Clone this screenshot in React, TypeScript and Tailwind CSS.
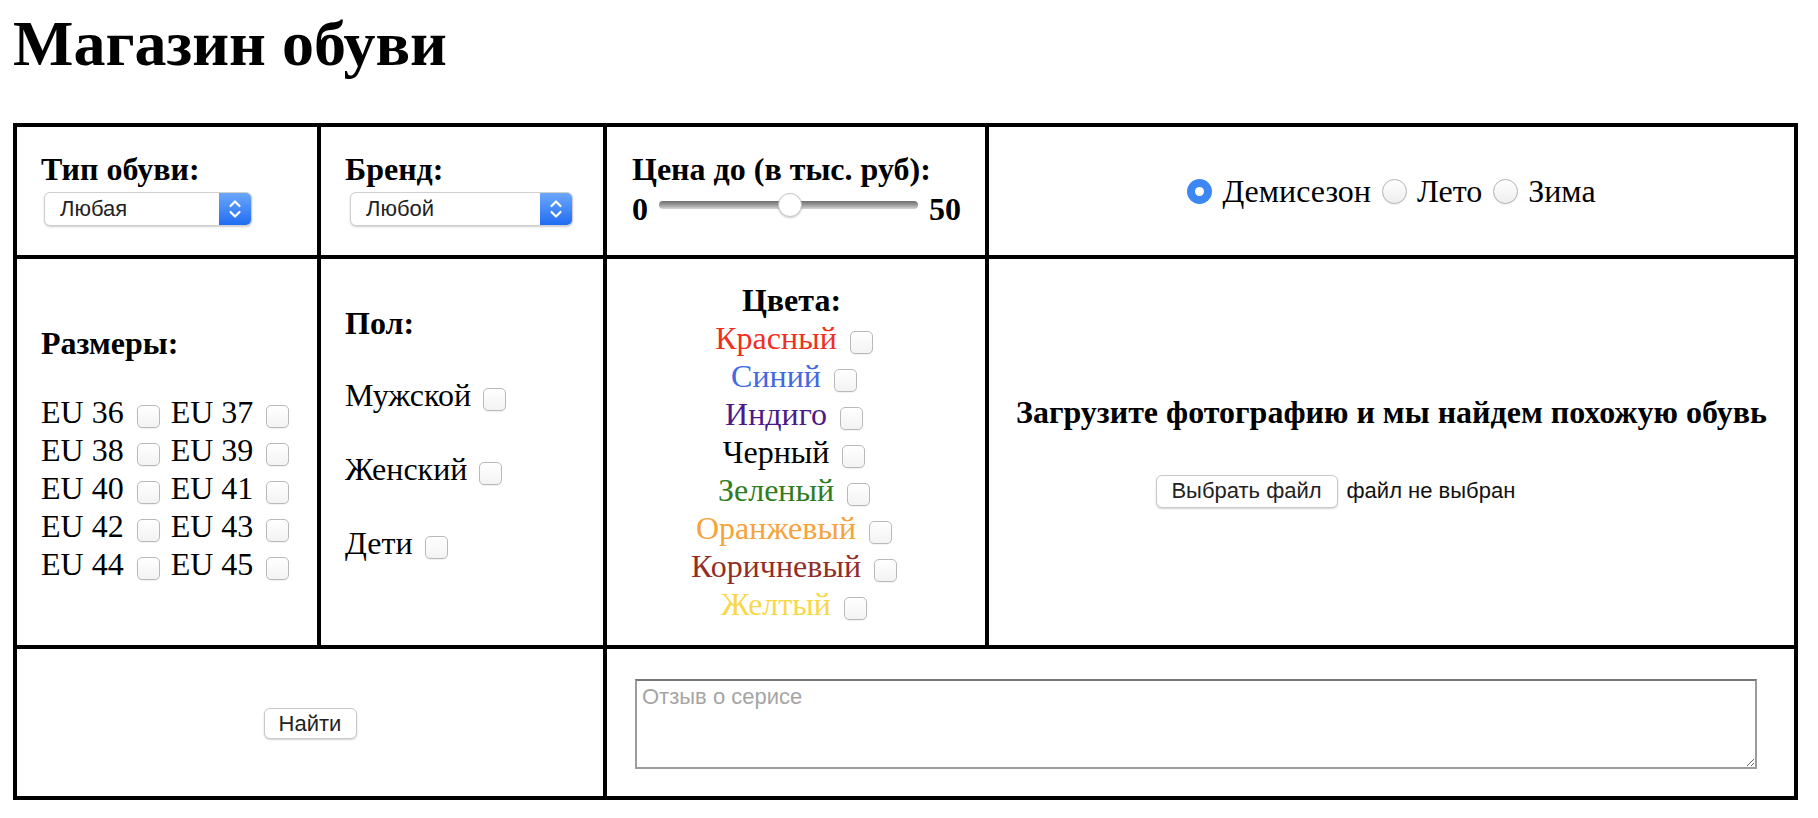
import React from 'react';

const sans = "font-['Liberation_Sans',Arial,sans-serif]";

function Check({ className = '' }: { className?: string }) {
  return (
    <input
      type="checkbox"
      readOnly
      className={`appearance-none shrink-0 w-[23px] h-[23px] rounded-[5px] border border-[#b9b9b9] bg-gradient-to-b from-white to-[#f3f3f3] shadow-[0_1px_1px_rgba(0,0,0,0.06)] ${className}`}
    />
  );
}

function Radio({ checked = false }: { checked?: boolean }) {
  if (checked) {
    return (
      <span className="flex w-[25px] h-[25px] shrink-0 items-center justify-center rounded-full bg-[#3d87f5]">
        <span className="w-[9px] h-[9px] rounded-full bg-white" />
      </span>
    );
  }
  return (
    <span className="block w-[25px] h-[25px] shrink-0 rounded-full border border-[#b3b3b3] bg-gradient-to-b from-white to-[#eeeeee] shadow-[0_1px_1px_rgba(0,0,0,0.08)]" />
  );
}

function FakeSelect({ label, className = '' }: { label: string; className?: string }) {
  return (
    <div
      className={`flex h-[34px] overflow-hidden rounded-[6px] border border-[#cfcfcf] bg-white shadow-[0_1px_2px_rgba(0,0,0,0.2)] ${className}`}
    >
      <span className={`flex flex-1 items-center pl-[15px] text-[22px] text-[#222] ${sans}`}>{label}</span>
      <span className="flex w-[32px] flex-col items-center justify-center bg-gradient-to-b from-[#6aa6fa] to-[#1f6cf3]">
        <svg width="14" height="22" viewBox="0 0 14 22" fill="none" stroke="white" strokeWidth="2.2" strokeLinecap="round" strokeLinejoin="round">
          <path d="M2.5 8 L7 3.5 L11.5 8" />
          <path d="M2.5 14 L7 18.5 L11.5 14" />
        </svg>
      </span>
    </div>
  );
}

const sizes = [
  ['EU 36', 'EU 37'],
  ['EU 38', 'EU 39'],
  ['EU 40', 'EU 41'],
  ['EU 42', 'EU 43'],
  ['EU 44', 'EU 45'],
];

const colors = [
  { name: 'Красный', cls: 'text-[#f0301f]' },
  { name: 'Синий', cls: 'text-[#4169e1]' },
  { name: 'Индиго', cls: 'text-[#4b1a88]' },
  { name: 'Черный', cls: 'text-black' },
  { name: 'Зеленый', cls: 'text-[#2f7d1c]' },
  { name: 'Оранжевый', cls: 'text-[#f5a33a]' },
  { name: 'Коричневый', cls: 'text-[#922e28]' },
  { name: 'Желтый', cls: 'text-[#f8d84a]' },
];

export default function App() {
  return (
    <div className="min-h-screen bg-white px-[13px] pt-[7px] font-['Liberation_Serif','Times_New_Roman',serif] text-black">
      <h1 className="text-[64px] leading-[74px] font-bold">Магазин обуви</h1>

      <div className="mt-[42px] grid w-fit grid-cols-[300px_282px_378px_805px] grid-rows-[128px_386px_147px] gap-[4px] bg-black p-[4px] text-[32px] leading-[38px]">
        {/* Row 1 */}
        <div className="bg-white pl-[24px] pt-[23px]">
          <div className="font-bold">Тип обуви:</div>
          <FakeSelect label="Любая" className="ml-[3px] mt-[4px] w-[208px]" />
        </div>

        <div className="bg-white pl-[24px] pt-[23px]">
          <div className="font-bold">Бренд:</div>
          <FakeSelect label="Любой" className="ml-[5px] mt-[4px] w-[223px]" />
        </div>

        <div className="bg-white pl-[25px] pt-[23px] font-bold">
          <div>Цена до (в тыс. руб):</div>
          <div className="mt-[2px] flex h-[38px] items-center">
            <span>0</span>
            <div className="relative ml-[11px] mb-[8px] h-[8px] w-[259px] rounded-full bg-gradient-to-b from-[#6e6e6e] via-[#9c9c9c] to-[#d6d6d6]">
              <span className="absolute left-[119px] top-[-8px] h-[24px] w-[24px] rounded-full border border-[#c6c6c6] bg-white shadow-[0_1px_2px_rgba(0,0,0,0.2)]" />
            </div>
            <span className="ml-[11px]">50</span>
          </div>
        </div>

        <div className="flex items-center justify-center bg-white">
          <Radio checked />
          <span className="ml-[10px]">Демисезон</span>
          <span className="ml-[11px]"><Radio /></span>
          <span className="ml-[10px]">Лето</span>
          <span className="ml-[11px]"><Radio /></span>
          <span className="ml-[10px]">Зима</span>
        </div>

        {/* Row 2 */}
        <div className="bg-white pl-[24px] pt-[65px]">
          <div className="font-bold">Размеры:</div>
          <div className="mt-[31px]">
            {sizes.map(([a, b]) => (
              <div key={a} className="flex h-[38px] items-center">
                <span>{a}</span>
                <Check className="ml-[13px] mt-[8px]" />
                <span className="ml-[11px]">{b}</span>
                <Check className="ml-[13px] mt-[8px]" />
              </div>
            ))}
          </div>
        </div>

        <div className="bg-white pl-[24px] pt-[45px]">
          <div className="font-bold">Пол:</div>
          <div className="mt-[34px] flex h-[38px] items-center">
            <span>Мужской</span>
            <Check className="ml-[12px] mt-[8px]" />
          </div>
          <div className="mt-[36px] flex h-[38px] items-center">
            <span>Женский</span>
            <Check className="ml-[12px] mt-[8px]" />
          </div>
          <div className="mt-[36px] flex h-[38px] items-center">
            <span>Дети</span>
            <Check className="ml-[12px] mt-[8px]" />
          </div>
        </div>

        <div className="flex flex-col items-center bg-white pt-[22px]">
          <div className="pr-[9px] font-bold">Цвета:</div>
          {colors.map((c) => (
            <div key={c.name} className="flex h-[38px] items-center">
              <span className={c.cls}>{c.name}</span>
              <Check className="ml-[13px] mr-[4px] mt-[8px]" />
            </div>
          ))}
        </div>

        <div className="flex flex-col items-center bg-white pt-[134px]">
          <div className="font-bold">Загрузите фотографию и мы найдем похожую обувь</div>
          <div className={`mt-[41px] flex w-[472px] items-center text-[22px] ${sans}`}>
            <button className="flex h-[33px] w-[182px] items-center justify-center rounded-[6px] border border-[#c9c9c9] bg-white text-[#222] shadow-[0_1px_2px_rgba(0,0,0,0.18)]">
              Выбрать файл
            </button>
            <span className="ml-[9px] text-[#111]">файл не выбран</span>
          </div>
        </div>

        {/* Row 3 */}
        <div className="col-span-2 flex items-center justify-center bg-white">
          <button
            className={`mt-[2px] flex h-[31px] w-[93px] items-center justify-center rounded-[6px] border border-[#c9c9c9] bg-white text-[22px] text-[#222] shadow-[0_1px_2px_rgba(0,0,0,0.18)] ${sans}`}
          >
            Найти
          </button>
        </div>

        <div className="col-span-2 bg-white pl-[28px] pt-[30px]">
          <textarea
            placeholder="Отзыв о серисе"
            className={`block h-[90px] w-[1122px] border-2 border-[#9c9c9c] border-t-[#777] px-[5px] pt-[3px] text-[22px] leading-[26px] placeholder:text-[#a5a5a5] outline-none ${sans}`}
          />
        </div>
      </div>
    </div>
  );
}
